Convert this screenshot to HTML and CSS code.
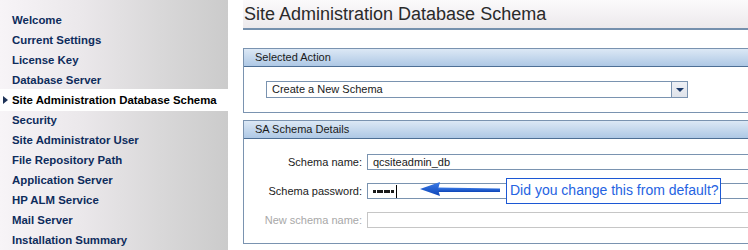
FILE: index.html
```html
<!DOCTYPE html>
<html lang="en">
<head>
  <meta charset="UTF-8" />
  <title>Site Administration Database Schema</title>
  <link rel="stylesheet" href="styles.css">
</head>
<body>
  <!-- Wizard steps -->
  <div class="sidebar">
    <ul class="steps">
      <li>Welcome</li>
      <li>Current Settings</li>
      <li>License Key</li>
      <li>Database Server</li>
      <li class="current">Site Administration Database Schema</li>
      <li>Security</li>
      <li>Site Administrator User</li>
      <li>File Repository Path</li>
      <li>Application Server</li>
      <li>HP ALM Service</li>
      <li>Mail Server</li>
      <li>Installation Summary</li>
    </ul>
  </div>

  <!-- Page content -->
  <div class="main">
    <h1 class="page-title">Site Administration Database Schema</h1>

    <div class="panel">
      <div class="panel-head">Selected Action</div>
      <div class="panel-body action-body">
        <div class="select">
          <span class="select-value">Create a New Schema</span>
          <span class="select-btn"><span class="caret"></span></span>
        </div>
      </div>
    </div>

    <div class="panel">
      <div class="panel-head">SA Schema Details</div>
      <div class="panel-body form-grid">
        <label>Schema name:</label>
        <div class="field">qcsiteadmin_db</div>

        <label>Schema password:</label>
        <div class="field">
          <span class="dot"></span><span class="dot"></span><span class="dot"></span>
          <span class="dot"></span><span class="dot"></span><span class="dot"></span>
          <span class="caret-bar"></span>
        </div>

        <label class="disabled">New schema name:</label>
        <div class="field disabled"></div>
      </div>
    </div>
  </div>

  <!-- Callout overlay -->
  <svg class="callout-arrow" width="90" height="20" viewBox="0 0 90 20">
    <defs>
      <linearGradient id="shaft" x1="0" y1="0" x2="0" y2="1">
        <stop offset="0" stop-color="#3b7be8"/>
        <stop offset="1" stop-color="#0d45b8"/>
      </linearGradient>
    </defs>
    <path d="M20,8.5 L82,9.5 L82,13 L20,13 Z" fill="url(#shaft)"/>
    <path d="M2,10 L22,3 L20,10.5 L22,17 Z" fill="url(#shaft)"/>
  </svg>
  <div class="callout">Did you change this from default?</div>
</body>
</html>
```

FILE: styles.css
```css
/* BASE */
* { margin: 0; padding: 0; box-sizing: border-box; }
body {
  display: flex;
  width: 748px; height: 250px;
  overflow: hidden;
  background: #fff;
  font-family: 'Liberation Sans', Arial, sans-serif;
  color: #1a1a1a;
}

/* SIDEBAR */
.sidebar {
  flex: 0 0 228px;
  height: 250px;
  background: linear-gradient(to right, #f7f4f7 0%, #ebe8eb 35%, #d9d8d9 70%, #cbcbcb 100%);
  padding-top: 10px;
}
.steps { list-style: none; }
.steps li {
  position: relative;
  height: 20px; line-height: 20px;
  padding-left: 12px;
  font-size: 11.4px; font-weight: bold;
  color: #0e2c5c;
  white-space: nowrap;
}
.steps li.current {
  background: #fff;
  color: #000;
  height: 22px; line-height: 22px;
  margin: -1px 0;
}
.steps li.current::before {
  content: "";
  position: absolute; left: 3px; top: 7px;
  border-left: 5px solid #1e3358;
  border-top: 4px solid transparent;
  border-bottom: 4px solid transparent;
}

/* MAIN */
.main {
  flex: 1;
  min-width: 0;
  overflow: hidden;
  padding-left: 15px;
}
.page-title {
  width: 600px;
  height: 30px;
  padding: 4px 0 0 1px;
  font-size: 18px; font-weight: normal;
  color: #2a2a2a;
  background: linear-gradient(#fbfafb, #ece9ec);
  border-bottom: 2px solid #7590ad;
}

/* PANELS */
.panel {
  width: 580px;
  border: 1px solid #7a93b0;
  margin-top: 18px;
}
.panel + .panel { margin-top: 7px; }
.panel-head {
  height: 18px; line-height: 16px;
  padding-left: 11px;
  font-size: 11px;
  color: #1a1a1a;
  background: linear-gradient(#dce8f5, #aec8e5);
  border-bottom: 1px solid #4e6f95;
}
.action-body { padding: 14px 0 14px 22px; }

.select {
  display: flex;
  width: 422px; height: 17px;
  border: 1px solid #7a93b0;
  background: #fff;
}
.select-value {
  flex: 1;
  padding-left: 5px;
  font-size: 11px; line-height: 15px;
}
.select-btn {
  width: 16px;
  display: flex; align-items: center; justify-content: center;
  border-left: 1px solid #7a93b0;
  background: linear-gradient(#eef0f5, #dfe3ea);
}
.caret {
  border-top: 4px solid #1c3a6a;
  border-left: 4px solid transparent;
  border-right: 4px solid transparent;
}

/* FORM */
.form-grid {
  display: grid;
  grid-template-columns: 118px 430px;
  column-gap: 5px;
  row-gap: 13px;
  padding: 15px 0 15px 0;
  align-items: center;
}
.form-grid label {
  text-align: right;
  font-size: 11px;
  color: #1a1a1a;
}
.form-grid label.disabled { color: #a8a8a8; }
.field {
  display: flex; align-items: center;
  height: 16px;
  border: 1px solid #7a93b0;
  padding-left: 5px;
  font-size: 11px;
}
.field.disabled { border-color: #c6c6c6; }
.dot {
  width: 3px; height: 3px;
  margin-right: 0.6px;
  background: #1a1a1a;
}
.caret-bar {
  width: 1px; height: 13px;
  margin-left: 1px;
  background: #000;
}

/* CALLOUT */
.callout-arrow {
  position: absolute; left: 418px; top: 179px;
}
.callout {
  position: absolute; left: 506px; top: 178px;
  width: 215px; height: 26px;
  border: 1.5px solid #1c58d4;
  background: #fff;
  padding-left: 3px;
  font-size: 14px; line-height: 23px;
  color: #2563e2;
  white-space: nowrap;
}
```
